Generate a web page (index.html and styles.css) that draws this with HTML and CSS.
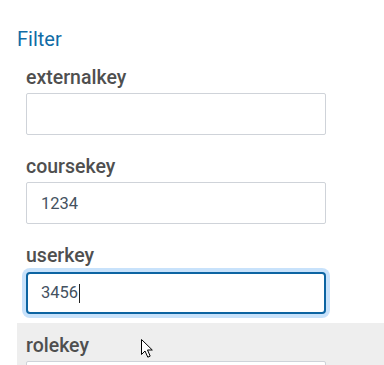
FILE: index.html
```html
<!DOCTYPE html>
<html lang="en">

<head>
    <meta charset="UTF-8">
    <meta name="viewport" content="width=device-width, initial-scale=1.0">
    <title>Filter</title>
    <link rel="stylesheet" href="styles.css">
</head>

<body>
    <div class="filter">
        <h2 class="filter-title">Filter</h2>
        <div class="field">
            <label class="field-label" for="externalkey">externalkey</label>
            <input class="field-input" id="externalkey" type="text">
        </div>
        <div class="field">
            <label class="field-label" for="coursekey">coursekey</label>
            <input class="field-input" id="coursekey" type="text" value="1234">
        </div>
        <div class="field">
            <label class="field-label" for="userkey">userkey</label>
            <input class="field-input is-focused" id="userkey" type="text" value="3456">
            <span class="caret"></span>
        </div>
        <div class="field is-hover">
            <label class="field-label" for="rolekey">rolekey</label>
            <input class="field-input" id="rolekey" type="text">
            <!-- mouse pointer -->
            <svg class="pointer" width="14" height="21" viewBox="0 0 14 21">
                <path d="M1.5 1.5 L1.5 16.5 L5 13 L7.8 19.2 L10.2 18.1 L7.5 12 L12.3 12 Z" fill="#fff" stroke="#000" stroke-width="1" stroke-linejoin="round"/>
            </svg>
        </div>
    </div>
</body>
</html>
```

FILE: styles.css
```css
* {
    margin: 0;
    box-sizing: border-box;
    padding: 0;
}

body {
    font-family: Roboto, "Liberation Sans", sans-serif;
    background: #fff;
    overflow: hidden;
}

.filter {
    padding-left: 17px;
}

.filter-title {
    padding-top: 27px;
    font-size: 20px;
    line-height: 24px;
    font-weight: 400;
    color: #116ca6;
    margin-bottom: 4px;
}

.field {
    position: relative;
    padding: 11.5px 9px 9.5px;
}

.field.is-hover {
    background: #eeeeee;
}

.field-label {
    display: block;
    font-size: 19.5px;
    line-height: 21.6px;
    font-weight: 500;
    color: #4f4f4f;
    margin-bottom: 4.9px;
}

.field-input {
    display: block;
    width: 300px;
    height: 42px;
    padding: 0 14px;
    border: 1px solid #cfd3d9;
    border-radius: 2px;
    background: #fff;
    font-family: inherit;
    font-size: 16.5px;
    color: #44525f;
    outline: none;
}

.field-input.is-focused {
    border: 2px solid #0c64a2;
    border-radius: 4px;
    padding-left: 13px;
    box-shadow: 0 0 0 4px #c8e2fb;
}

.caret {
    position: absolute;
    left: 62px;
    top: 50px;
    width: 1px;
    height: 19px;
    background: #222;
}

.pointer {
    position: absolute;
    left: 123px;
    top: 15px;
}
```
